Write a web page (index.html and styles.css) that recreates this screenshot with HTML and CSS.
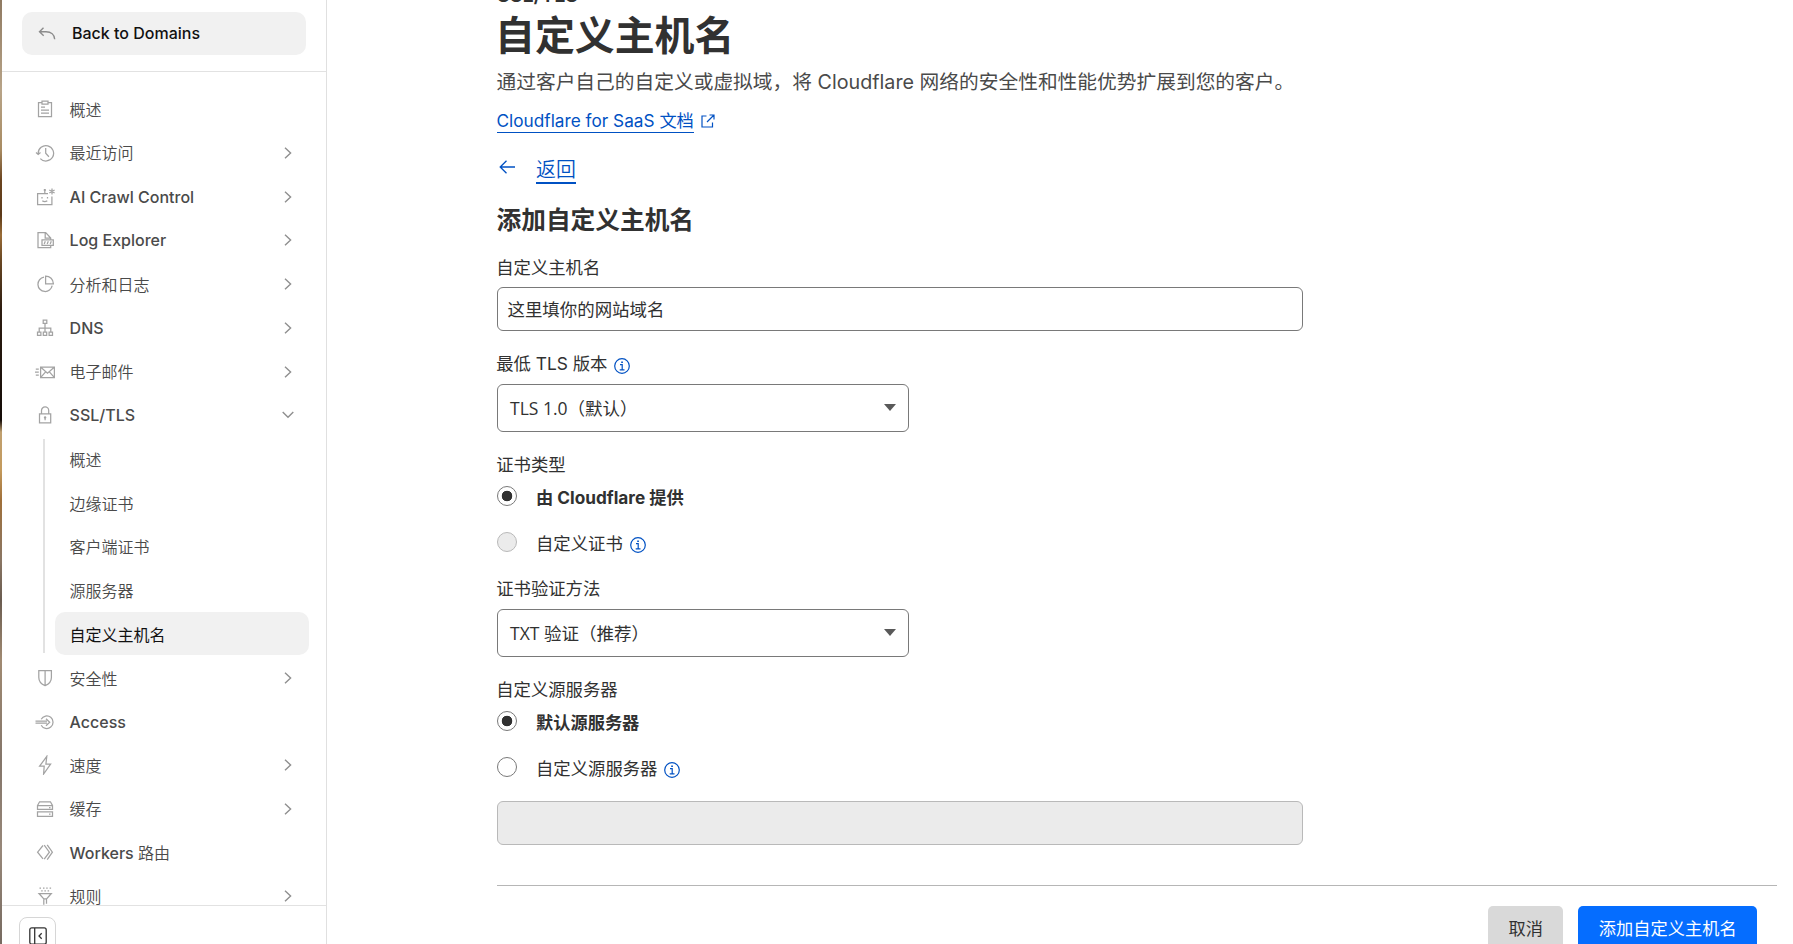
FILE: index.html
```html
<!DOCTYPE html>
<html lang="zh-CN">
<head>
<meta charset="utf-8">
<title>自定义主机名</title>
<link rel="stylesheet" href="styles.css">
</head>
<body>
<svg class="defs" width="0" height="0">
  <symbol id="chev" viewBox="0 0 12 12"><path d="M3 .7 8.6 6 3 11.3"/></symbol>
  <symbol id="chev-down" viewBox="0 0 12 12"><path d="M.7 3 6 8.3 11.3 3"/></symbol>
  <symbol id="info" viewBox="0 0 16 16"><circle cx="8" cy="8" r="7.3"/><path d="M6 6.7h2.2v5M5.7 11.8h4.8"/><path class="dot" d="M7.2 3.4h1.7v1.7H7.2z"/></symbol>
</svg>
<div class="app">
  <div class="edge"></div>
  <aside class="sidebar">
    <div class="side-head">
      <a class="back-btn">
        <svg class="ico-back" viewBox="0 0 18 14"><path d="M5.5 .8 1.5 4.7l4.2 4M1.5 4.7H8c5 0 8.5 2.8 8.7 7.6"/></svg>
        <span>Back to Domains</span>
      </a>
    </div>
    <nav class="nav">
      <a class="item zh"><svg class="ico" viewBox="0 0 20 20"><path d="M7 3.5H3.5v14h13v-14H13M7 2h6v3H7zM6 8h4M6 11h8M6 14h8"/></svg><span>概述</span></a>
      <a class="item zh"><svg class="ico" viewBox="0 0 20 20"><path d="M3.2 10.5A7.7 7.7 0 1 1 5.3 15.6M1 9.6l2.2 1.8 2.3-1.8M10.7 5v5.3l3.2 3.4"/></svg><span>最近访问</span><svg class="chev"><use href="#chev"/></svg></a>
      <a class="item"><svg class="ico" viewBox="0 0 20 20"><path d="M13 6.5H2.6v11h14.3V9.500M9.8 6.500V3.500M7 10v1.600M12.500 10v1.600M7.300 13.700c1.500 1.200 3.400 1.200 5 0M17 1.500v6M14.300 3l5.300 3M19.600 3l-5.300 3"/><path class="dot" d="M8.800 2h2v2h-2z"/></svg><span>AI Crawl Control</span><svg class="chev"><use href="#chev"/></svg></a>
      <a class="item"><svg class="ico" viewBox="0 0 20 20"><path d="M6.500 17.500h9.200v-1.800M15.700 9.500V8l-5-5.500H3v15h3.500M10.200 2.600v5.600h5.400M7 9.800h11.300v5.600H7zM9.200 14l1.100-2.700M12.200 14l1.100-2.700M15.200 14l1.100-2.700"/></svg><span>Log Explorer</span><svg class="chev"><use href="#chev"/></svg></a>
      <a class="item zh"><svg class="ico" viewBox="0 0 20 20"><path d="M9 3.200a7.200 7.200 0 1 0 8.200 8.500M10.600 2v7.800h7.800A7.800 7.800 0 0 0 10.600 2z"/></svg><span>分析和日志</span><svg class="chev"><use href="#chev"/></svg></a>
      <a class="item"><svg class="ico" viewBox="0 0 20 20"><path d="M8.200 2h3.600v3.400H8.200zM10 5.400V14M4.200 14v-4h11.600v4M2.500 14h3.400v3.400H2.500zM8.300 14h3.400v3.400H8.300zM14.100 14h3.400v3.400h-3.400z"/></svg><span>DNS</span><svg class="chev"><use href="#chev"/></svg></a>
      <a class="item zh"><svg class="ico" viewBox="0 0 20 20"><path d="M5.600 5h13.800v10.500H5.600zM5.800 5.200l6.700 6 6.700-6M5.800 15.300l4.800-5.500M19.200 15.300l-4.800-5.500M.8 7.200h3M0 10.200h3.800M.8 13.200h3"/></svg><span>电子邮件</span><svg class="chev"><use href="#chev"/></svg></a>
      <a class="item"><svg class="ico" viewBox="0 0 20 20"><path d="M4.500 8.800h11.200v9H4.500zM6.500 8.800V5.500a3.600 3.600 0 0 1 7.200 0v3.300M10.100 13v2.300"/><circle class="dot" cx="10.1" cy="12.4" r="1.2"/></svg><span>SSL/TLS</span><svg class="chev"><use href="#chev-down"/></svg></a>
      <div class="sub">
        <a class="subitem">概述</a>
        <a class="subitem">边缘证书</a>
        <a class="subitem">客户端证书</a>
        <a class="subitem">源服务器</a>
        <a class="subitem active">自定义主机名</a>
      </div>
      <a class="item zh"><svg class="ico" viewBox="0 0 20 20"><path d="M3.800 2.600h12.600v6.800c0 4-2.400 6.600-6.300 8.200-3.900-1.600-6.300-4.200-6.300-8.200zM10.100 2.600v15"/></svg><span>安全性</span><svg class="chev"><use href="#chev"/></svg></a>
      <a class="item"><svg class="ico" viewBox="0 0 20 20"><path d="M6.200 7.200a6.300 6.300 0 1 1 0 6M.5 9.200h11.500M.5 11.200h11.500M11 6.700l3.700 3.500-3.700 3.500"/></svg><span>Access</span></a>
      <a class="item zh"><svg class="ico" viewBox="0 0 20 20"><path d="M11.800 1.300 4.600 11.200h4.600l-.6 7.800 7-10h-4.700z"/></svg><span>速度</span><svg class="chev"><use href="#chev"/></svg></a>
      <a class="item zh"><svg class="ico" viewBox="0 0 20 20"><path d="M2.500 6.500 4.600 2.800h10.800l2.100 3.700v3.800h-15zM2.500 6.500h15M2.500 12.800h15v4.500h-15zM14 8.500h1.500M14 15h1.500"/></svg><span>缓存</span><svg class="chev"><use href="#chev"/></svg></a>
      <a class="item"><svg class="ico" viewBox="0 0 20 20"><path d="M8 3.500 2.600 10.200 8 16.900M9.200 3.200l5.200 7-5.200 7M12.200 2.800l5.200 7.400-5.200 7.400"/></svg><span>Workers <em>路由</em></span></a>
      <a class="item zh"><svg class="ico" viewBox="0 0 20 20"><path d="M4.500 2H6M8 2h1.500M11.200 2h1.500M14.600 2h1.500M6.200 4.800h1.500M9.400 4.800h1.500M12.600 4.800h1.500M4 7.500h12.300l-4.700 5.300H8.800zM8.800 12.800v6M11.500 12.800v5"/></svg><span>规则</span><svg class="chev"><use href="#chev"/></svg></a>
    </nav>
    <div class="side-foot">
      <div class="collapse"><svg viewBox="0 0 18 18"><rect x=".8" y=".8" width="16.4" height="16.4" rx="2"/><path d="M5.700 1v16M12.700 6.200 10 9l2.700 2.800"/></svg></div>
    </div>
  </aside>
  <main class="main">
    <div class="eyebrow">SSL/TLS</div>
    <h1 class="title">自定义主机名</h1>
    <p class="desc">通过客户自己的自定义或虚拟域，将 Cloudflare 网络的安全性和性能优势扩展到您的客户。</p>
    <div class="doc"><a class="doc-link">Cloudflare for SaaS 文档</a><svg class="ext" viewBox="0 0 14 14"><path d="M5.500 2H1v11h10.500V8.500M8.500 1H13v4.500M13 1 6 8"/></svg></div>
    <div class="return"><svg class="arrow" viewBox="0 0 16 14"><path d="M7.500.7 1.200 7l6.300 6.300M1.200 7H16"/></svg><a class="return-link">返回</a></div>
    <h2 class="heading">添加自定义主机名</h2>

    <div class="label">自定义主机名</div>
    <div class="input">这里填你的网站域名</div>

    <div class="label l2">最低 TLS 版本<svg class="info"><use href="#info"/></svg></div>
    <div class="select">TLS 1.0（默认）<i class="caret"></i></div>

    <div class="label l3">证书类型</div>
    <div class="radio-row"><i class="radio on"></i><b>由 Cloudflare 提供</b></div>
    <div class="radio-row second"><i class="radio off"></i><span>自定义证书</span><svg class="info"><use href="#info"/></svg></div>

    <div class="label l4">证书验证方法</div>
    <div class="select">TXT 验证（推荐）<i class="caret"></i></div>

    <div class="label l5">自定义源服务器</div>
    <div class="radio-row"><i class="radio on"></i><b>默认源服务器</b></div>
    <div class="radio-row second"><i class="radio"></i><span>自定义源服务器</span><svg class="info"><use href="#info"/></svg></div>
    <div class="input disabled"></div>

    <div class="actions">
      <button class="btn">取消</button>
      <button class="btn primary">添加自定义主机名</button>
    </div>
  </main>
</div>
</body>
</html>
```
FILE: styles.css
```css
* { box-sizing: border-box; }
html, body { margin: 0; height: 100%; overflow: hidden; background: #fff; }
body { font-family: Inter, "Noto Sans CJK SC", sans-serif; color: #313131; }
svg { fill: none; stroke: currentColor; flex: none; }
.defs { display: block; height: 0; }
.dot { fill: currentColor; stroke: none; }

.app { display: flex; height: 944px; }
.edge {
  width: 2px;
  background: linear-gradient(#8f7a62 0, #b8a488 90px, #a88b62 150px, #6b4520 180px, #5a3818 215px, #9a6d38 235px, #6a4824 260px, #2c1c10 310px, #140c08 420px, #c0a070 432px, #c49a5c 470px, #a0703a 500px, #8a7664 560px, #6a5c50 600px, #a08a72 660px, #84766a 760px, #98887a 850px, #766a60 944px);
}

.sidebar {
  width: 325px;
  display: flex;
  flex-direction: column;
  border-right: 1px solid #e0e0e0;
  font-size: 16px;
  font-weight: 500;
  color: #4a4a4a;
}
.side-head { height: 72px; padding: 12px 20px 0; border-bottom: 1px solid #e2e2e2; }
.back-btn {
  display: flex;
  align-items: center;
  height: 43px;
  width: 284px;
  padding-left: 16px;
  gap: 16px;
  border-radius: 10px;
  background: #f1f1f1;
  color: #111;
}
.back-btn span { padding-bottom: 2px; }
.ico-back { width: 18px; height: 14px; color: #8c8c8c; stroke-width: 1.4; }
.nav { flex: 1; min-height: 0; overflow: hidden; padding: 15.3px 22px 0 33px; font-weight: 500; }
.item { display: flex; align-items: center; height: 43.75px; }
.sub ~ .item { height: 43.6px; }
.item span { flex: 1; margin-left: 14.6px; }
.item em { font-style: normal; font-weight: 350; }
.zh span { font-weight: 350; padding-bottom: 1px; }
.item .ico { width: 20px; height: 20px; color: #a3a3a3; stroke-width: 1.25; }
.chev { width: 12px; height: 12px; margin-right: 10px; color: #8f8f8f; stroke-width: 1.4; }
.sub { margin-left: 8px; height: 219px; position: relative; padding-left: 12px; font-weight: 350; }
.sub::before {
  content: "";
  position: absolute;
  left: 0;
  top: 2px;
  bottom: 3px;
  width: 2px;
  background: #e2e2e2;
}
.subitem {
  display: flex;
  align-items: center;
  height: 43px;
  margin-bottom: .8px;
  padding-left: 14.6px;
  width: 254px;
  border-radius: 10px;
}
.subitem.active { background: #f1f1f1; color: #111; font-weight: 400; }
.side-foot { height: 39px; border-top: 1px solid #e2e2e2; padding: 11px 17px 0; overflow: hidden; }
.collapse {
  width: 37px;
  height: 37px;
  border: 1px solid #d6d6d6;
  border-radius: 8px;
  display: flex;
  justify-content: center;
  padding-top: 9px;
  color: #333;
}
.collapse svg { width: 18px; height: 18px; stroke-width: 1.3; }

.main {
  flex: 1;
  display: flex;
  flex-direction: column;
  padding: 0 16px 0 170px;
  overflow: hidden;
  font-size: 17.23px;
}
.main > * { flex: none; }
.eyebrow { height: 24px; line-height: 24px; margin-top: -17px; font-size: 19.7px; font-weight: 600; }
.title { margin: 0 0 0 -2px; height: 57px; line-height: 57px; font-size: 39.9px; font-weight: 700; }
.desc { margin: 4px 0 0 -.5px; height: 28px; line-height: 28px; font-size: 19.73px; color: #4a4a4a; white-space: nowrap; }
.doc { display: flex; height: 26px; margin-top: 12px; color: #0051c3; }
.doc-link { height: 25px; line-height: 25px; margin-left: -.5px; border-bottom: 1px solid; }
.ext { width: 14px; height: 14px; margin: 6px 0 0 7px; stroke-width: 1.2; }
.return { display: flex; height: 28px; margin-top: 22px; color: #0051c3; }
.arrow { width: 16px; height: 14px; margin: 4px 21px 0 2px; stroke-width: 1.3; }
.return-link { height: 28px; line-height: 29px; font-size: 19.9px; font-weight: 350; border-bottom: 2px solid; }
.heading { margin: 21px 0 0 -.5px; height: 31px; line-height: 31px; font-size: 24.7px; font-weight: 700; }
.label { display: flex; align-items: center; height: 24px; line-height: 24px; margin: 20px 0 0 -.8px; font-size: 17.35px; font-weight: 380; }
.input {
  width: 806px;
  height: 44px;
  margin-top: 7px;
  padding-left: 9.5px;
  line-height: 43px;
  border: 1px solid #797979;
  border-radius: 6px;
  font-size: 17.45px;
}
.info { width: 16px; height: 16px; margin: 3px 0 0 7px; color: #0051c3; stroke-width: 1.2; }
.label.l2 { margin-top: 21px; }
.select {
  display: flex;
  align-items: center;
  justify-content: space-between;
  width: 412px;
  height: 48px;
  margin-top: 8px;
  padding: 0 12px;
  border: 1px solid #797979;
  border-radius: 6px;
  font-family: "Open Sans", "Noto Sans CJK SC", sans-serif;
  font-size: 17.5px;
  padding-bottom: 1px;
}
.caret { border: 6px solid transparent; border-top: 7px solid #595959; border-bottom: 0; }
.label.l3 { margin-top: 21px; }
.radio-row { display: flex; align-items: center; height: 24px; margin-top: 7px; }
.radio-row.second { margin-top: 22px; }
.radio-row .info { margin-top: 5px; }
.radio { width: 20px; height: 20px; margin-right: 19px; border: 1px solid #797979; border-radius: 50%; }
.radio.on { background: radial-gradient(circle, #313131 5px, transparent 5.6px); }
.radio.off { background: #ebebeb; border-color: #b9b9b9; }
.radio-row span { font-size: 17.35px; }
.label.l4 { margin-top: 23px; }
.label.l5 { margin-top: 21px; }
.input.disabled { margin-top: 22px; background: #ebebeb; border-color: #b9b9b9; }
.actions {
  display: flex;
  justify-content: flex-end;
  gap: 15px;
  margin-top: 40px;
  padding: 20px 20px 0 0;
  border-top: 1px solid #b6b6b6;
}
.btn {
  height: 42px;
  padding: 0 20.4px;
  border: 0;
  border-radius: 5px;
  background: #d9d9d9;
  color: #313131;
  font: inherit;
}
.btn.primary { background: #056dff; color: #fff; }
```
